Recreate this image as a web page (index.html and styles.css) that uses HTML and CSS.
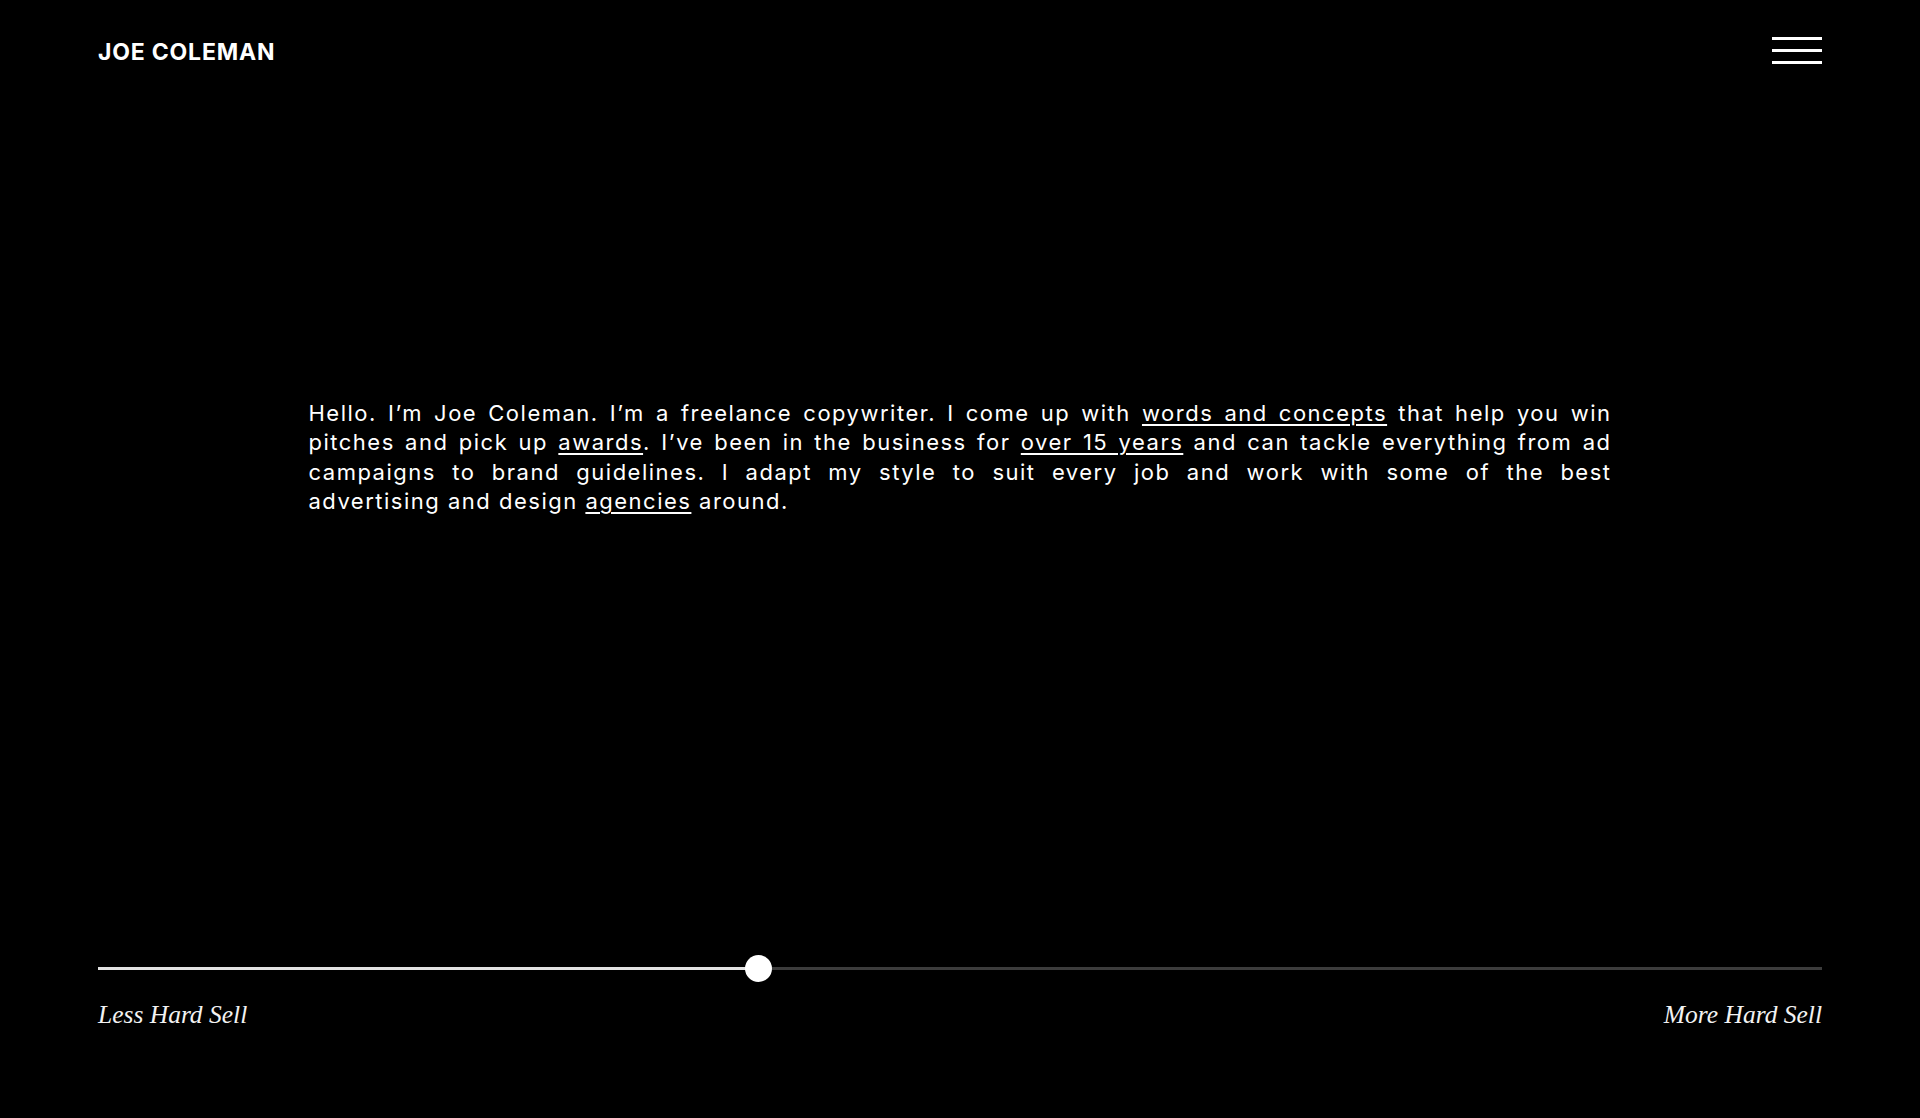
FILE: index.html
```html
<!DOCTYPE html>
<html lang="en">
<head>
<meta charset="utf-8">
<title>Joe Coleman</title>
<link rel="stylesheet" href="styles.css">
</head>
<body>
<div class="page">
  <header class="header">
    <a class="logo" href="#">JOE COLEMAN</a>
    <button class="menu" aria-label="Menu">
      <span class="bar"></span>
      <span class="bar"></span>
      <span class="bar"></span>
    </button>
  </header>
  <main class="main">
    <p class="intro">Hello. I’m Joe Coleman. I’m a freelance copywriter. I come up with <a href="#">words and concepts</a> that help you win pitches and pick up <a href="#">awards</a>. I’ve been in the business for <a href="#">over 15 years</a> and can tackle everything from ad campaigns to brand guidelines. I adapt my style to suit every job and work with some of the best <span class="intro-end">advertising and design <a href="#">agencies</a> around.</span></p>
  </main>
  <footer class="footer">
    <div class="slider">
      <div class="fill" style="width: 38.3%"></div>
      <div class="thumb"></div>
      <div class="rest"></div>
    </div>
    <div class="labels">
      <span class="label">Less Hard Sell</span>
      <span class="label">More Hard Sell</span>
    </div>
  </footer>
</div>
</body>
</html>
```

FILE: styles.css
```css
html, body {
  margin: 0;
  padding: 0;
  background: #000;
  color: #fff;
}
body {
  font-family: Inter, "Liberation Sans", sans-serif;
}
.page {
  min-height: 100vh;
  display: flex;
  flex-direction: column;
}
.header {
  height: 100px;
  padding: 0 98px;
  display: flex;
  align-items: center;
  justify-content: space-between;
}
.logo {
  color: #fff;
  text-decoration: none;
  font-weight: 700;
  font-size: 23px;
  letter-spacing: 0.8px;
  padding-top: 4px;
}
.menu {
  width: 50px;
  background: none;
  border: 0;
  padding: 0;
  display: flex;
  flex-direction: column;
  gap: 9px;
  cursor: pointer;
}
.bar {
  display: block;
  height: 3px;
  background: #fff;
}
.main {
  flex: 1;
  padding-top: 299px;
  display: flex;
  justify-content: center;
}
.intro {
  margin: 0;
  width: 1303px;
  font-size: 22px;
  line-height: 29.4px;
  letter-spacing: 1.5px;
  text-align: justify;
  text-align-last: justify;
}
.intro-end {
  display: block;
  text-align-last: auto;
}
.intro a {
  color: #fff;
  text-decoration: underline;
  text-decoration-thickness: 1.5px;
  text-underline-offset: 3px;
}
.footer {
  padding: 0 98px 88px;
}
.slider {
  height: 28px;
  display: flex;
  align-items: center;
}
.fill {
  height: 3px;
  background: #e2e2e2;
}
.thumb {
  width: 27px;
  height: 27px;
  border-radius: 50%;
  background: #fff;
  margin: 0 -13.5px;
  position: relative;
  z-index: 1;
  flex: none;
}
.rest {
  flex: 1;
  height: 3px;
  background: #3c3c3c;
}
.labels {
  margin-top: 18px;
  display: flex;
  justify-content: space-between;
}
.label {
  font-family: "Liberation Serif", serif;
  font-style: italic;
  font-size: 25.5px;
  line-height: 30px;
  color: #f2f2f2;
}
```
